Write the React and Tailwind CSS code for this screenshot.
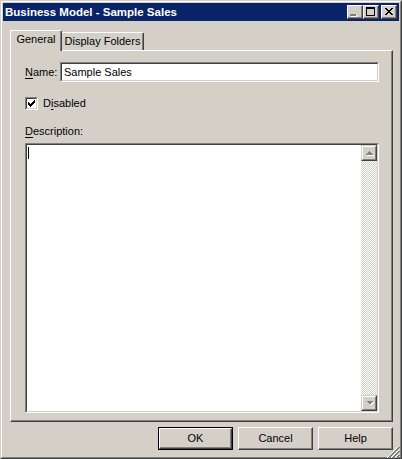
import React from "react";

function Raised({ className = "", children }) {
  return (
    <div
      className={
        "border border-t-white border-l-white border-r-[#404040] border-b-[#404040] shadow-[inset_-1px_-1px_#808080] bg-[#d4d0c8] " +
        className
      }
    >
      {children}
    </div>
  );
}

function Sunken({ className = "", innerClassName = "", children }) {
  return (
    <div
      className={
        "border border-t-[#808080] border-l-[#808080] border-r-white border-b-white " +
        className
      }
    >
      <div
        className={
          "w-full h-full border border-t-[#404040] border-l-[#404040] border-r-[#d4d0c8] border-b-[#d4d0c8] bg-white " +
          innerClassName
        }
      >
        {children}
      </div>
    </div>
  );
}

function TitleBtn({ children }) {
  return (
    <Raised className="w-[16px] h-[14px] relative">
      <svg
        width="16"
        height="14"
        viewBox="0 0 16 14"
        className="absolute -left-px -top-px"
        shapeRendering="crispEdges"
      >
        {children}
      </svg>
    </Raised>
  );
}

function CloseGlyph() {
  const rects = [];
  for (let i = 0; i < 7; i++) {
    rects.push(<rect key={"a" + i} x={4 + i} y={3 + i} width="2" height="1" fill="#000" />);
    rects.push(<rect key={"b" + i} x={10 - i} y={3 + i} width="2" height="1" fill="#000" />);
  }
  return <>{rects}</>;
}

function Grip() {
  const r = [];
  for (let k = 0; k < 3; k++) {
    const off = k * 4;
    for (let i = 0; i <= 10 - off; i++) {
      // white line
      r.push(<rect key={`w${k}-${i}`} x={off + i} y={11 - i} width="1" height="1" fill="#ffffff" />);
      r.push(<rect key={`g${k}-${i}`} x={off + i + 1} y={11 - i} width="2" height="1" fill="#808080" />);
    }
  }
  return (
    <svg
      width="13"
      height="12"
      viewBox="0 0 13 12"
      className="absolute left-[386px] top-[445px]"
      shapeRendering="crispEdges"
    >
      {r}
    </svg>
  );
}

function Check() {
  const px = [
    [6],
    [5, 6],
    [0, 4, 5, 6],
    [0, 1, 3, 4, 5],
    [0, 1, 2, 3, 4],
    [1, 2, 3],
    [2],
  ];
  return (
    <svg width="7" height="7" viewBox="0 0 7 7" shapeRendering="crispEdges">
      {px.map((row, y) =>
        row.map((x) => <rect key={`${x}-${y}`} x={x} y={y} width="1" height="1" fill="#000" />)
      )}
    </svg>
  );
}

function ArrowBtn({ down }) {
  return (
    <div className="w-[16px] h-[16px] border border-t-[#d4d0c8] border-l-[#d4d0c8] border-r-[#404040] border-b-[#404040] bg-[#d4d0c8]">
      <div className="w-full h-full border border-t-white border-l-white border-r-[#808080] border-b-[#808080] flex items-center justify-center">
        <svg width="9" height="6" viewBox="0 0 9 6" shapeRendering="crispEdges">
          {down ? (
            <>
              <polygon points="1,1 8,1 4.5,4.5" fill="#ffffff" transform="translate(1,1)" />
              <polygon points="1,1 8,1 4.5,4.5" fill="#808080" />
            </>
          ) : (
            <>
              <polygon points="4.5,1 8,4.5 1,4.5" fill="#ffffff" transform="translate(1,1)" />
              <polygon points="4.5,1 8,4.5 1,4.5" fill="#808080" />
            </>
          )}
        </svg>
      </div>
    </div>
  );
}

export default function App() {
  return (
    <div className="w-[402px] h-[459px] relative bg-[#d4d0c8] border border-t-[#d4d0c8] border-l-[#d4d0c8] border-r-[#404040] border-b-[#404040] font-['Liberation_Sans',Arial,sans-serif] text-[11px] leading-[13px] text-black select-none">
      <div className="w-full h-full border border-t-white border-l-white border-r-[#808080] border-b-[#808080] p-px flex flex-col">
        {/* Title bar */}
        <div className="h-[18px] bg-[#0a246a] flex items-center pl-[2px] pr-[2px] shrink-0">
          <span className="flex-1 text-white font-bold text-[11.5px] leading-[14px]">
            Business Model - Sample Sales
          </span>
          <div className="flex items-center">
            <TitleBtn>
              <rect x="4" y="10" width="6" height="2" fill="#ffffff" />
              <rect x="3" y="9" width="6" height="2" fill="#808080" />
            </TitleBtn>
            <TitleBtn>
              <rect x="3" y="2" width="9" height="2" fill="#000" />
              <rect x="3" y="2" width="1" height="9" fill="#000" />
              <rect x="11" y="2" width="1" height="9" fill="#000" />
              <rect x="3" y="10" width="9" height="1" fill="#000" />
            </TitleBtn>
            <div className="w-[2px]" />
            <TitleBtn>
              <CloseGlyph />
            </TitleBtn>
          </div>
        </div>

        {/* Tabs */}
        <div className="mt-[9px] pl-[7px] flex items-end h-[20px] relative z-10 shrink-0">
          <div className="h-[21px] w-[52px] -mb-px bg-[#d4d0c8] border-l border-t border-r border-l-white border-t-white border-r-[#404040] rounded-t-[2px] shadow-[inset_-1px_0_#808080] flex items-center justify-center pb-[3px]">
            General
          </div>
          <div className="h-[18px] w-[82px] border-t border-r border-t-white border-r-[#404040] rounded-tr-[2px] shadow-[inset_-1px_0_#808080] flex items-center justify-center pb-px">
            Display Folders
          </div>
        </div>

        {/* Panel */}
        <div className="ml-[7px] mr-[6px] h-[372px] shrink-0 border border-t-white border-l-white border-r-[#404040] border-b-[#404040] shadow-[inset_-1px_-1px_#808080] pt-[11px] pl-[14px] flex flex-col">
          {/* Name */}
          <div className="flex items-center h-[20px]">
            <div className="w-[35px]">
              <span className="underline underline-offset-[2px]">N</span>ame:
            </div>
            <Sunken className="w-[319px] h-[20px]" innerClassName="flex items-center pl-[2px]">
              Sample Sales
            </Sunken>
          </div>

          {/* Checkbox */}
          <div className="flex items-center h-[13px] mt-[15px]">
            <Sunken className="w-[13px] h-[13px]" innerClassName="flex items-center justify-center">
              <Check />
            </Sunken>
            <div className="ml-[5px]">
              D<span className="underline underline-offset-[2px]">i</span>sabled
            </div>
          </div>

          {/* Description label */}
          <div className="mt-[15px] h-[13px]">
            <span className="underline underline-offset-[2px]">D</span>escription:
          </div>

          {/* Textarea */}
          <Sunken className="mt-[5px] w-[354px] h-[270px]" innerClassName="flex">
            <div className="flex-1 pl-px pt-[2px]">
              <div className="w-px h-[12px] bg-black" />
            </div>
            <div className="w-[16px] h-full flex flex-col">
              <ArrowBtn />
              <div className="flex-1 bg-[conic-gradient(#d4d0c8_25%,#ffffff_0_50%,#d4d0c8_0_75%,#ffffff_0)] bg-[length:2px_2px]" />
              <ArrowBtn down />
            </div>
          </Sunken>
        </div>

        {/* Buttons */}
        <div className="mt-[5px] flex justify-end gap-[5px] pr-[6px] shrink-0">
          <div className="w-[75px] h-[23px] border border-black">
            <Raised className="w-full h-full flex items-center justify-center">OK</Raised>
          </div>
          <Raised className="w-[75px] h-[23px] flex items-center justify-center">Cancel</Raised>
          <Raised className="w-[75px] h-[23px] flex items-center justify-center">Help</Raised>
        </div>
      </div>
      <Grip />
    </div>
  );
}
